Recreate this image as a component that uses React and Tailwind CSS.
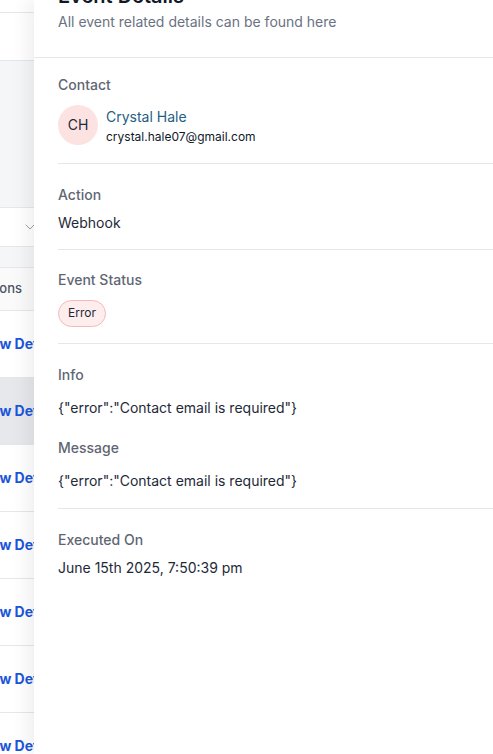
import React from 'react';
import { ChevronDown } from 'lucide-react';

const rows = [0, 1, 2, 3, 4, 5, 6];

function Label({ children, className = '' }) {
  return <div className={`text-sm font-medium leading-5 text-[#5f6673] ${className}`}>{children}</div>;
}

export default function App() {
  return (
    <div className="relative h-[754px] w-full overflow-hidden bg-white font-['Inter',sans-serif]">
      {/* Page underneath the drawer */}
      <div className="flex h-full flex-col">
        <div className="h-[13px] shrink-0 border-b border-gray-200" />
        <div className="h-12 shrink-0 border-b border-gray-200" />
        <div className="h-[147px] shrink-0 border-b border-gray-200 bg-[#f5f6f8]" />
        <div className="flex h-[39px] shrink-0 items-center border-b border-gray-200 pl-[22px]">
          <ChevronDown size={16} strokeWidth={1.5} className="text-gray-400" />
        </div>
        <div className="h-[21px] shrink-0 border-b border-gray-200 bg-[#f5f6f8]" />
        <div className="flex h-[43px] shrink-0 items-center border-b border-gray-200 bg-[#fafafa]">
          <span className="ml-[-25px] whitespace-nowrap text-[13px] font-medium text-gray-600">Actions</span>
        </div>
        {rows.map((r) => (
          <div
            key={r}
            className={`flex h-[67px] shrink-0 items-center border-b border-gray-200 ${r === 1 ? 'bg-[#e6e8ec]' : 'bg-white'}`}
          >
            <span className="ml-[-23px] whitespace-nowrap text-sm font-bold text-[#1a56db]">View Details</span>
          </div>
        ))}
      </div>

      {/* Drawer */}
      <div className="absolute inset-y-0 left-[34px] right-0 bg-white shadow-[-6px_0_18px_rgba(0,0,0,0.07)]">
        <div className="-mt-[18px] border-b border-gray-200 px-6 pb-[25px]">
          <h2 className="text-xl font-semibold leading-7 text-gray-900">Event Details</h2>
          <p className="mt-0.5 text-sm leading-5 text-gray-500">All event related details can be found here</p>
        </div>

        <div className="pl-6">
          <section className="border-b border-gray-200 pb-[18px] pt-[17px]">
            <Label className="mb-2.5">Contact</Label>
            <div className="flex items-center gap-2">
              <div className="flex h-10 w-10 items-center justify-center rounded-full bg-[#fde2e2] text-sm text-gray-800">
                CH
              </div>
              <div>
                <div className="text-sm leading-6 text-[#255e84]">Crystal Hale</div>
                <div className="text-xs leading-4 text-gray-900">crystal.hale07@gmail.com</div>
              </div>
            </div>
          </section>

          <section className="border-b border-gray-200 pb-4 pt-[21px]">
            <Label className="mb-2">Action</Label>
            <div className="text-sm leading-5 text-gray-800">Webhook</div>
          </section>

          <section className="border-b border-gray-200 pb-4 pt-5">
            <Label className="mb-[9px]">Event Status</Label>
            <span className="inline-flex h-[27px] items-center rounded-full border border-[#f5b8b8] bg-[#fdeded] px-[9px] text-xs text-gray-800">
              Error
            </span>
          </section>

          <section className="border-b border-gray-200 pb-[17px] pt-[21px]">
            <Label className="mb-[13px]">Info</Label>
            <div className="text-sm leading-5 text-gray-800">{'{"error":"Contact email is required"}'}</div>
            <Label className="mb-[13px] mt-5">Message</Label>
            <div className="text-sm leading-5 text-gray-800">{'{"error":"Contact email is required"}'}</div>
          </section>

          <section className="pt-[21px]">
            <Label className="mb-2">Executed On</Label>
            <div className="text-sm leading-5 text-gray-800">June 15th 2025, 7:50:39 pm</div>
          </section>
        </div>
      </div>
    </div>
  );
}
